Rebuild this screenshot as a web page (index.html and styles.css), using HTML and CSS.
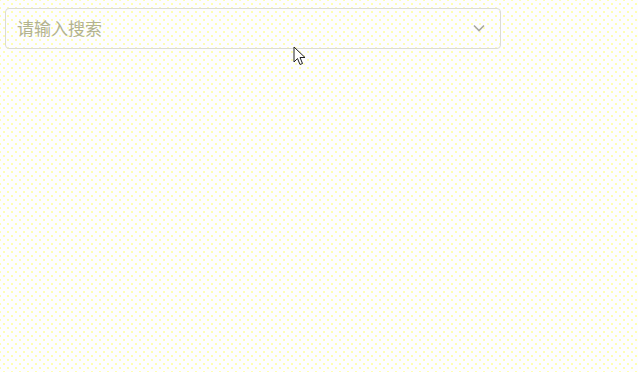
FILE: index.html
```html
<!DOCTYPE html>
<html>
<head>
    <meta charset="utf-8">
    <link rel="stylesheet" href="styles.css">
</head>
<body>
    <div class="page">
        <div class="select">
            <input class="select-input" type="text" placeholder="请输入搜索" readonly>
            <span class="select-arrow">
                <svg width="14" height="14" viewBox="0 0 14 14">
                    <path d="M2 4.5 L7 9.5 L12 4.5" fill="none" stroke="#a8a8a0" stroke-width="1.6"/>
                </svg>
            </span>
        </div>
    </div>

    <!-- mouse pointer from the capture -->
    <svg class="cursor" width="14" height="22" viewBox="0 0 14 22">
        <path d="M1 1 L1 16 L4.5 12.5 L7 18.5 L9.5 17.5 L7 11.5 L12 11.5 Z" fill="#fff" stroke="#222" stroke-width="1" stroke-linejoin="round"/>
    </svg>
</body>
</html>
```

FILE: styles.css
```css
* {
    margin: 0;
    padding: 0;
    box-sizing: border-box;
}

html, body {
    width: 100%;
    height: 100%;
    overflow: hidden;
}

body {
    background-color: #fdfdff;
    background-image:
        radial-gradient(circle, #ffff88 0.6px, transparent 0.9px),
        radial-gradient(circle, #ffff88 0.6px, transparent 0.9px);
    background-size: 8px 8px;
    background-position: 0 0, 4px 4px;
    font-family: "Noto Sans CJK SC", "Noto Sans", sans-serif;
}

.page {
    padding: 8px 5px;
}

.select {
    position: relative;
    width: 496px;
    height: 41px;
    border: 1px solid #dcdcd2;
    border-radius: 4px;
    display: flex;
    align-items: center;
}

.select-input {
    flex: 1;
    height: 100%;
    border: none;
    outline: none;
    background: transparent;
    padding: 0 30px 3px 11px;
    font-family: "Noto Sans CJK SC", "Noto Sans", sans-serif;
    font-size: 17px;
    color: #606266;
}

.select-input::placeholder {
    color: #b2b290;
}

.select-arrow {
    width: 30px;
    display: flex;
    justify-content: center;
    align-items: center;
    padding-right: 12px;
    padding-bottom: 2px;
}

.cursor {
    position: absolute;
    left: 293px;
    top: 46px;
}
```
